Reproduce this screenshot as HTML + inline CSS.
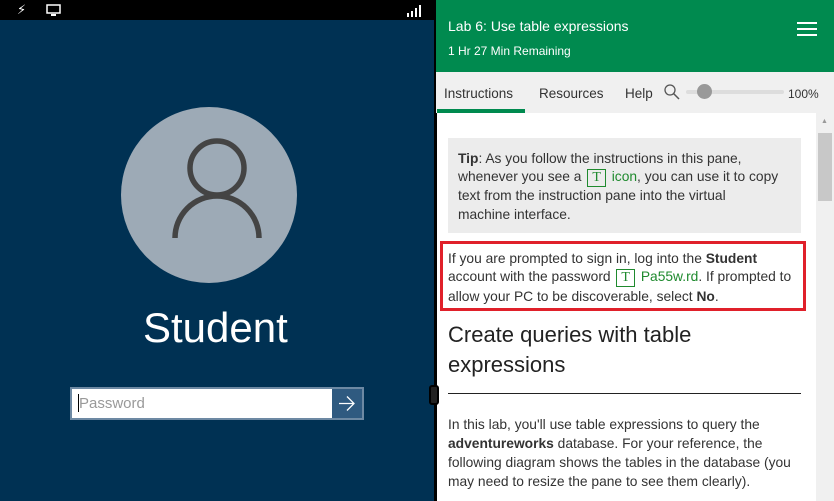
<!DOCTYPE html>
<html><head><meta charset="utf-8"><style>
*{margin:0;padding:0;box-sizing:border-box}
body{width:834px;height:501px;overflow:hidden;position:relative;font-family:"Liberation Sans",sans-serif;background:#fff}
.a{position:absolute;white-space:nowrap}
.t{font-size:13.8px;color:#333}
.g{color:#1f8a2e}
.ic{display:inline-block;border:1px solid #1f8a2e;color:#1f8a2e;font-family:"Liberation Serif",serif;font-size:14px;line-height:16px;padding:0 4px;margin:0 2px}
</style></head><body>
<div class="a" style="left:0;top:0;width:434px;height:20px;background:#000"></div>
<div class="a" style="left:17px;top:2px;color:#fff;font-size:13px">&#x26A1;&#xFE0E;</div>
<svg class="a" style="left:46px;top:4px" width="16" height="13"><rect x="1" y="1" width="13" height="8" fill="none" stroke="#fff" stroke-width="1.5"/><rect x="5" y="10" width="5" height="2" fill="#fff"/></svg>
<svg class="a" style="left:406px;top:5px" width="18" height="12"><rect x="1" y="8" width="2" height="4" fill="#fff"/><rect x="5" y="6" width="2" height="6" fill="#fff"/><rect x="9" y="3" width="2" height="9" fill="#fff"/><rect x="13" y="0" width="2" height="12" fill="#fff"/></svg>
<div class="a" style="left:0;top:20px;width:434px;height:481px;background:#003153"></div>
<svg class="a" style="left:0;top:20px" width="434" height="300"><circle cx="209" cy="175" r="88" fill="#9daab6"/><circle cx="217" cy="148" r="27" fill="none" stroke="#444" stroke-width="5.5"/><path d="M175 218 A42 42 0 0 1 259 218" fill="none" stroke="#444" stroke-width="5.5"/></svg>
<div class="a" style="left:143px;top:304px;color:#fff;font-size:42px;font-weight:300">Student</div>
<div class="a" style="left:70px;top:387px;width:294px;height:33px;background:#6d89a3"></div>
<div class="a" style="left:72px;top:389px;width:260px;height:29px;background:#fff"></div>
<div class="a" style="left:79px;top:395px;color:#999;font-size:15px">Password</div>
<div class="a" style="left:78px;top:394px;width:1px;height:18px;background:#000"></div>
<div class="a" style="left:332px;top:389px;width:30px;height:29px;background:#2f5a80"></div>
<svg class="a" style="left:337px;top:394px" width="20" height="19"><path d="M2 9.5 H17 M10 2.5 L17 9.5 L10 16.5" fill="none" stroke="#fff" stroke-width="1.3"/></svg>
<div class="a" style="left:434px;top:0;width:3px;height:501px;background:#000"></div>
<div class="a" style="left:429px;top:385px;width:10px;height:20px;background:#222;border-radius:3px;border:2px solid #000"></div>
<div class="a" style="left:436px;top:0;width:398px;height:72px;background:#008a4f"></div>
<div class="a" style="left:448px;top:18px;color:#fff;font-size:14px">Lab 6: Use table expressions</div>
<div class="a" style="left:448px;top:44px;color:#fff;font-size:12px">1 Hr 27 Min Remaining</div>
<div class="a" style="left:797px;top:22px;width:20px;height:2px;background:#fff;box-shadow:0 6px 0 #fff,0 12px 0 #fff"></div>
<div class="a" style="left:436px;top:72px;width:398px;height:41px;background:#f0f0f0"></div>
<div class="a" style="left:444px;top:86px;color:#333;font-size:13.5px">Instructions</div>
<div class="a" style="left:437px;top:109px;width:88px;height:4px;background:#008a4f"></div>
<div class="a" style="left:539px;top:86px;color:#333;font-size:13.5px">Resources</div>
<div class="a" style="left:625px;top:86px;color:#333;font-size:13.5px">Help</div>
<svg class="a" style="left:663px;top:83px" width="18" height="18"><circle cx="7" cy="7" r="5" fill="none" stroke="#555" stroke-width="1.3"/><path d="M10.5 10.5 L16 16" stroke="#555" stroke-width="1.5"/></svg>
<div class="a" style="left:686px;top:90px;width:98px;height:4px;background:#ddd;border-radius:2px"></div>
<div class="a" style="left:697px;top:84px;width:15px;height:15px;background:#999;border-radius:50%"></div>
<div class="a" style="left:788px;top:87px;color:#333;font-size:12px">100%</div>
<div class="a" style="left:816px;top:113px;width:18px;height:388px;background:#f0f0f0"></div>
<div class="a" style="left:818px;top:133px;width:14px;height:68px;background:#c8c8c8"></div>
<div class="a" style="left:821px;top:118px;color:#999;font-size:7px">&#9650;</div>
<div class="a" style="left:448px;top:138px;width:353px;height:95px;background:#ececec"></div>
<div class="a t" style="left:458px;top:151px"><b>Tip</b>: As you follow the instructions in this pane,</div>
<div class="a t" style="left:458px;top:169px">whenever you see a <span class="ic">T</span> <span class="g">icon</span>, you can use it to copy</div>
<div class="a t" style="left:458px;top:188px">text from the instruction pane into the virtual</div>
<div class="a t" style="left:458px;top:207px">machine interface.</div>
<div class="a" style="left:440px;top:241px;width:366px;height:70px;border:3px solid #e0202a"></div>
<div class="a t" style="left:448px;top:251px">If you are prompted to sign in, log into the <b>Student</b></div>
<div class="a t" style="left:448px;top:269px">account with the password <span class="ic">T</span> <span class="g">Pa55w.rd</span>. If prompted to</div>
<div class="a t" style="left:448px;top:289px">allow your PC to be discoverable, select <b>No</b>.</div>
<div class="a" style="left:448px;top:322px;color:#222;font-size:22px;font-weight:300">Create queries with table</div>
<div class="a" style="left:448px;top:352px;color:#222;font-size:22px;font-weight:300">expressions</div>
<div class="a" style="left:448px;top:393px;width:353px;height:1px;background:#222"></div>
<div class="a t" style="left:448px;top:417px">In this lab, you'll use table expressions to query the</div>
<div class="a t" style="left:448px;top:436px"><b>adventureworks</b> database. For your reference, the</div>
<div class="a t" style="left:448px;top:455px">following diagram shows the tables in the database (you</div>
<div class="a t" style="left:448px;top:474px">may need to resize the pane to see them clearly).</div>
</body></html>
